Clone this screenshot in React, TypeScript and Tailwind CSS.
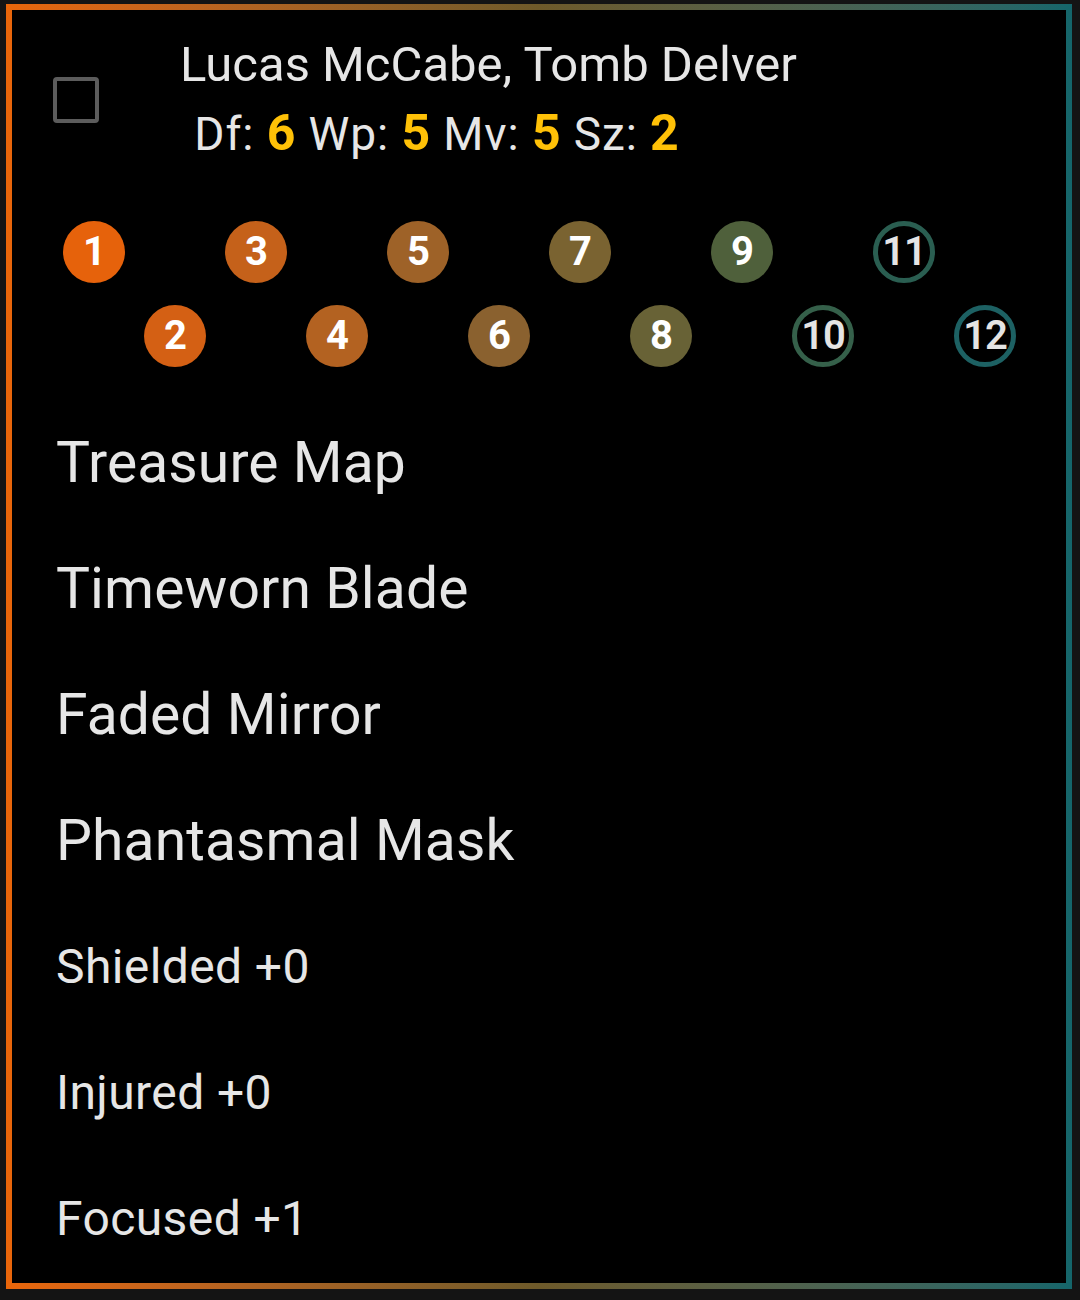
import React from "react";

const items = ["Treasure Map", "Timeworn Blade", "Faded Mirror", "Phantasmal Mask"];
const statuses = ["Shielded +0", "Injured +0", "Focused +1"];

// activation track, filled steps fade orange -> green, the last three are only rings
const steps = [
  { n: 1, cls: "bg-[#e6620b] text-white font-bold" },
  { n: 2, cls: "bg-[#d46014] text-white font-bold" },
  { n: 3, cls: "bg-[#c5611a] text-white font-bold" },
  { n: 4, cls: "bg-[#b36221] text-white font-bold" },
  { n: 5, cls: "bg-[#9e6228] text-white font-bold" },
  { n: 6, cls: "bg-[#8a612f] text-white font-bold" },
  { n: 7, cls: "bg-[#7a6331] text-white font-bold" },
  { n: 8, cls: "bg-[#686236] text-white font-bold" },
  { n: 9, cls: "bg-[#4f603b] text-white font-bold" },
  { n: 10, cls: "border-[5px] border-[#35604a] text-[#e4e4e4] font-semibold" },
  { n: 11, cls: "border-[5px] border-[#2a5e51] text-[#e4e4e4] font-semibold" },
  { n: 12, cls: "border-[5px] border-[#1d6163] text-[#e4e4e4] font-semibold" },
];

function Step({ n, cls }: { n: number; cls: string }) {
  return (
    <div
      className={`w-[62px] h-[62px] rounded-full flex items-center justify-center text-[40px] leading-none tracking-[-1px] ${cls}`}
    >
      {n}
    </div>
  );
}

function Stat({ label, value }: { label: string; value: number }) {
  return (
    <>
      {label}: <span className="font-bold text-[#ffc107] text-[50px] leading-none">{value}</span>
    </>
  );
}

export default function App() {
  const odd = steps.filter((s) => s.n % 2 === 1);
  const even = steps.filter((s) => s.n % 2 === 0);

  return (
    <div
      className="w-[1080px] h-[1300px] bg-[#141414] pt-[4px] pl-[6px]"
      style={{ fontFamily: "Roboto, 'Noto Sans', sans-serif" }}
    >
      <div className="w-[1066px] h-[1285px] p-[6px] bg-gradient-to-r from-[#e9660a] via-[#6e5a2a] to-[#14666b]">
        <div className="w-full h-full bg-black text-[#e6e6e6] flex flex-col">
          <div className="flex items-center pt-[26px] pl-[41px]">
            <div className="w-[46px] h-[46px] border-[4px] border-[#5c5c5c] rounded-[4px] shrink-0" />
            <div className="ml-[81px] flex flex-col">
              <div className="text-[49px] leading-[58px] whitespace-pre">Lucas McCabe, Tomb Delver</div>
              <div className="text-[46px] leading-[58px] mt-[11px] ml-[2px] whitespace-pre tracking-[0.9px]">
                {" "}
                <Stat label="Df" value={6} /> <Stat label="Wp" value={5} />{" "}
                <Stat label="Mv" value={5} /> <Stat label="Sz" value={2} />
              </div>
            </div>
          </div>

          <div className="mt-[58px] flex flex-col gap-[22px]">
            <div className="flex gap-[100px] pl-[51px]">
              {odd.map((s) => (
                <Step key={s.n} {...s} />
              ))}
            </div>
            <div className="flex gap-[100px] pl-[132px]">
              {even.map((s) => (
                <Step key={s.n} {...s} />
              ))}
            </div>
          </div>

          <div className="mt-[33px] pl-[44px] flex flex-col">
            {items.map((t) => (
              <div key={t} className="text-[57px] leading-[126px] tracking-[0.1px]">
                {t}
              </div>
            ))}
            {statuses.map((t) => (
              <div key={t} className="text-[48px] leading-[126px] tracking-[0.4px]">
                {t}
              </div>
            ))}
          </div>
        </div>
      </div>
    </div>
  );
}
